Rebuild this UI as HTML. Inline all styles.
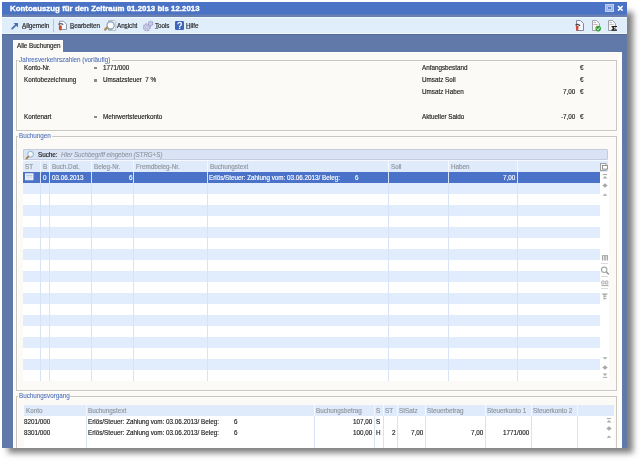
<!DOCTYPE html>
<html><head><meta charset="utf-8"><style>
html,body{margin:0;padding:0;width:641px;height:462px;overflow:hidden;background:#ffffff;}
body{position:relative;font-family:"Liberation Sans",sans-serif;}
.r{position:absolute;}
.t{will-change:transform;}
.t{position:absolute;font-size:6.3px;line-height:8px;white-space:nowrap;color:#222222;-webkit-text-stroke:0.15px currentColor;}
.title{font-size:7.8px;letter-spacing:0.05px;font-weight:bold;color:#ffffff;-webkit-text-stroke:0.35px #ffffff;}
.glabel{color:#4d6fb8;-webkit-text-stroke:0.08px currentColor;}
.head{color:#8e949c;}
.sel{color:#ffffff;}
.suche{color:#1a1a1a;-webkit-text-stroke:0.16px #1a1a1a;}
.ital{font-style:italic;color:#8a919c;-webkit-text-stroke:0.05px currentColor;}
u{text-decoration:underline;text-decoration-thickness:0.6px;text-underline-offset:0.3px;text-decoration-color:rgba(0,0,0,0.45);}
.tb{font-size:6.3px;letter-spacing:-0.05px;color:#1e1e1e;-webkit-text-stroke:0.15px #1e1e1e;}
</style></head><body>
<div class="r" style="left:2px;top:7px;width:625px;height:441px;background:#6179a9;box-shadow:6px 5px 6px rgba(0,0,0,0.5);"></div>
<div class="r" style="left:0;top:0;width:627px;height:448px;overflow:hidden;">
<div class="r" style="left:2px;top:2px;width:625px;height:13px;background:#4a73c6;"></div>
<div class="r" style="left:2px;top:14px;width:625px;height:1px;background:#5a78b8;"></div>
<div class="r" style="left:2px;top:15px;width:625px;height:2px;background:#6a80b0;"></div>
<div class="t title" style="left:9.8px;top:4.70px;">Kontoauszug für den Zeitraum 01.2013 bis 12.2013</div>
<div class="r" style="left:2px;top:17px;width:625px;height:17px;background:#e0eefb;border-top:1px solid #eef6fe;box-sizing:border-box;"></div>
<div class="r" style="left:2px;top:33px;width:625px;height:1px;background:#eef6fd;"></div>
<div class="r" style="left:2px;top:34px;width:625px;height:1px;background:#566d9a;"></div>
<div class="r" style="left:13px;top:52px;width:609px;height:396px;background:#fbfaf6;border:1px solid #ffffff;border-right:3px solid #ffffff;box-sizing:border-box;"></div>
<div class="r" style="left:13px;top:40px;width:50px;height:13px;background:#fbfaf6;border:1px solid #ffffff;border-bottom:none;box-sizing:border-box;"></div>
<div class="t " style="left:17.3px;top:41.50px;letter-spacing:-0.05px;">Alle Buchungen</div>
<div class="r" style="left:16px;top:60px;width:601px;height:71px;border:1px solid #c9c7be;border-bottom:1px solid #c9c7be;box-shadow:inset 1px 1px 0 #ffffff, 1px 1px 0 #ffffff;box-sizing:border-box;"></div>
<div class="r" style="left:18px;top:56px;width:94px;height:8px;background:#fbfaf6;"></div>
<div class="t glabel" style="left:18.8px;top:56.10px;">Jahresverkehrszahlen (vorläufig)</div>
<div class="t " style="left:23.5px;top:63.80px;">Konto-Nr.</div>
<div class="t " style="left:23.5px;top:76.30px;">Kontobezeichnung</div>
<div class="t " style="left:23.5px;top:112.80px;">Kontenart</div>
<div class="r" style="left:94px;top:66.7px;width:3px;height:2.6px;background:#8a8a8a;"></div>
<div class="t " style="left:102.6px;top:63.80px;">1771/000</div>
<div class="r" style="left:94px;top:79.2px;width:3px;height:2.6px;background:#8a8a8a;"></div>
<div class="t " style="left:102.6px;top:76.30px;">Umsatzsteuer&nbsp; 7 %</div>
<div class="r" style="left:94px;top:115.7px;width:3px;height:2.6px;background:#8a8a8a;"></div>
<div class="t " style="left:102.6px;top:112.80px;">Mehrwertsteuerkonto</div>
<div class="t " style="left:422px;top:63.70px;">Anfangsbestand</div>
<div class="t " style="left:579.5px;top:63.70px;">€</div>
<div class="t " style="left:422px;top:75.90px;">Umsatz Soll</div>
<div class="t " style="left:579.5px;top:75.90px;">€</div>
<div class="t " style="left:422px;top:88.30px;">Umsatz Haben</div>
<div class="t " style="left:579.5px;top:88.30px;">€</div>
<div class="t " style="left:422px;top:112.70px;">Aktueller Saldo</div>
<div class="t " style="left:579.5px;top:112.70px;">€</div>
<div class="t " style="right:51.799999999999955px;top:88.30px;">7,00</div>
<div class="t " style="right:51.799999999999955px;top:112.70px;">-7,00</div>
<div class="r" style="left:16px;top:136px;width:601px;height:255px;border:1px solid #c9c7be;border-bottom:1px solid #c9c7be;box-shadow:inset 1px 1px 0 #ffffff, 1px 1px 0 #ffffff;box-sizing:border-box;"></div>
<div class="r" style="left:18px;top:132px;width:33.5px;height:8px;background:#fbfaf6;"></div>
<div class="t glabel" style="left:18.8px;top:132.10px;">Buchungen</div>
<div class="r" style="left:23px;top:149px;width:585px;height:11px;background:#d9e3f4;border:1px solid #c3cde0;border-radius:1px;box-sizing:border-box;"></div>
<div class="r" style="left:23px;top:160px;width:585px;height:1px;background:#f6f9fd;"></div>
<div class="t suche" style="left:37.6px;top:151.00px;">Suche:</div>
<div class="t ital" style="left:61px;top:151.00px;letter-spacing:-0.08px;">Hier Suchbegriff eingeben (STRG+S)</div>
<div class="r" style="left:23px;top:161px;width:585px;height:11px;background:#dfebfb;"></div>
<div class="t head" style="left:24.8px;top:162.50px;">ST</div>
<div class="t head" style="left:42.5px;top:162.50px;">B</div>
<div class="t head" style="left:51.5px;top:162.50px;">Buch.Dat.</div>
<div class="t head" style="left:93.5px;top:162.50px;">Beleg-Nr.</div>
<div class="t head" style="left:135.5px;top:162.50px;">Fremdbeleg-Nr.</div>
<div class="t head" style="left:209.5px;top:162.50px;">Buchungstext</div>
<div class="t head" style="left:390.5px;top:162.50px;">Soll</div>
<div class="t head" style="left:450.5px;top:162.50px;">Haben</div>
<div class="t head" style="left:519.5px;top:162.50px;"></div>
<div class="r" style="left:23px;top:172px;width:586px;height:209px;background:#ffffff;"></div>
<div class="r" style="left:23px;top:172px;width:577px;height:11px;background:#4a72c8;"></div>
<div class="r" style="left:23px;top:183px;width:577px;height:11px;background:#e1edfc;"></div>
<div class="r" style="left:23px;top:205px;width:577px;height:11px;background:#e1edfc;"></div>
<div class="r" style="left:23px;top:227px;width:577px;height:11px;background:#e1edfc;"></div>
<div class="r" style="left:23px;top:249px;width:577px;height:11px;background:#e1edfc;"></div>
<div class="r" style="left:23px;top:271px;width:577px;height:11px;background:#e1edfc;"></div>
<div class="r" style="left:23px;top:293px;width:577px;height:11px;background:#e1edfc;"></div>
<div class="r" style="left:23px;top:315px;width:577px;height:11px;background:#e1edfc;"></div>
<div class="r" style="left:23px;top:337px;width:577px;height:11px;background:#e1edfc;"></div>
<div class="r" style="left:23px;top:359px;width:577px;height:11px;background:#e1edfc;"></div>
<div class="r" style="left:40px;top:172px;width:1px;height:209px;background:#d8e4f6;"></div>
<div class="r" style="left:40px;top:161px;width:1px;height:11px;background:#f4f8fe;"></div>
<div class="r" style="left:49px;top:172px;width:1px;height:209px;background:#d8e4f6;"></div>
<div class="r" style="left:49px;top:161px;width:1px;height:11px;background:#f4f8fe;"></div>
<div class="r" style="left:91px;top:172px;width:1px;height:209px;background:#d8e4f6;"></div>
<div class="r" style="left:91px;top:161px;width:1px;height:11px;background:#f4f8fe;"></div>
<div class="r" style="left:133px;top:172px;width:1px;height:209px;background:#d8e4f6;"></div>
<div class="r" style="left:133px;top:161px;width:1px;height:11px;background:#f4f8fe;"></div>
<div class="r" style="left:207px;top:172px;width:1px;height:209px;background:#d8e4f6;"></div>
<div class="r" style="left:207px;top:161px;width:1px;height:11px;background:#f4f8fe;"></div>
<div class="r" style="left:388px;top:172px;width:1px;height:209px;background:#d8e4f6;"></div>
<div class="r" style="left:388px;top:161px;width:1px;height:11px;background:#f4f8fe;"></div>
<div class="r" style="left:448px;top:172px;width:1px;height:209px;background:#d8e4f6;"></div>
<div class="r" style="left:448px;top:161px;width:1px;height:11px;background:#f4f8fe;"></div>
<div class="r" style="left:517px;top:172px;width:1px;height:209px;background:#d8e4f6;"></div>
<div class="r" style="left:517px;top:161px;width:1px;height:11px;background:#f4f8fe;"></div>
<div class="t sel" style="left:43px;top:173.50px;">0</div>
<div class="t sel" style="left:52.3px;top:173.50px;">03.06.2013</div>
<div class="t sel" style="right:494.7px;top:173.50px;">6</div>
<div class="t sel" style="left:209.4px;top:173.50px;">Erlös/Steuer: Zahlung vom: 03.06.2013/ Beleg:</div>
<div class="t sel" style="left:354.6px;top:173.50px;">6</div>
<div class="t sel" style="right:111.5px;top:173.50px;">7,00</div>
<div class="r" style="left:16px;top:396px;width:601px;height:52px;border:1px solid #c9c7be;border-bottom:none;box-shadow:inset 1px 1px 0 #ffffff, 1px 1px 0 #ffffff;box-sizing:border-box;"></div>
<div class="r" style="left:18px;top:392px;width:52px;height:8px;background:#fbfaf6;"></div>
<div class="t glabel" style="left:18.8px;top:392.10px;">Buchungsvorgang</div>
<div class="r" style="left:23.75px;top:405px;width:590px;height:11px;background:#dfebfb;"></div>
<div class="r" style="left:23.75px;top:416px;width:590px;height:32px;background:#ffffff;"></div>
<div class="t head" style="left:25.8px;top:406.50px;">Konto</div>
<div class="t head" style="left:87.8px;top:406.50px;">Buchungstext</div>
<div class="t head" style="left:315.8px;top:406.50px;">Buchungsbetrag</div>
<div class="t head" style="left:375.8px;top:406.50px;">S</div>
<div class="t head" style="left:384.8px;top:406.50px;">ST</div>
<div class="t head" style="left:398.8px;top:406.50px;">StSatz</div>
<div class="t head" style="left:426.8px;top:406.50px;">Steuerbetrag</div>
<div class="t head" style="left:486.8px;top:406.50px;">Steuerkonto 1</div>
<div class="t head" style="left:532.8px;top:406.50px;">Steuerkonto 2</div>
<div class="t head" style="left:578.8px;top:406.50px;"></div>
<div class="r" style="left:86px;top:416px;width:1px;height:32px;background:#d8e4f6;"></div>
<div class="r" style="left:86px;top:405px;width:1px;height:11px;background:#f4f8fe;"></div>
<div class="r" style="left:314px;top:416px;width:1px;height:32px;background:#d8e4f6;"></div>
<div class="r" style="left:314px;top:405px;width:1px;height:11px;background:#f4f8fe;"></div>
<div class="r" style="left:374px;top:416px;width:1px;height:32px;background:#d8e4f6;"></div>
<div class="r" style="left:374px;top:405px;width:1px;height:11px;background:#f4f8fe;"></div>
<div class="r" style="left:383px;top:416px;width:1px;height:32px;background:#d8e4f6;"></div>
<div class="r" style="left:383px;top:405px;width:1px;height:11px;background:#f4f8fe;"></div>
<div class="r" style="left:397px;top:416px;width:1px;height:32px;background:#d8e4f6;"></div>
<div class="r" style="left:397px;top:405px;width:1px;height:11px;background:#f4f8fe;"></div>
<div class="r" style="left:425px;top:416px;width:1px;height:32px;background:#d8e4f6;"></div>
<div class="r" style="left:425px;top:405px;width:1px;height:11px;background:#f4f8fe;"></div>
<div class="r" style="left:485px;top:416px;width:1px;height:32px;background:#d8e4f6;"></div>
<div class="r" style="left:485px;top:405px;width:1px;height:11px;background:#f4f8fe;"></div>
<div class="r" style="left:531px;top:416px;width:1px;height:32px;background:#d8e4f6;"></div>
<div class="r" style="left:531px;top:405px;width:1px;height:11px;background:#f4f8fe;"></div>
<div class="r" style="left:577px;top:416px;width:1px;height:32px;background:#d8e4f6;"></div>
<div class="r" style="left:577px;top:405px;width:1px;height:11px;background:#f4f8fe;"></div>
<div class="t " style="left:24px;top:417.50px;">8201/000</div>
<div class="t " style="left:88px;top:417.50px;">Erlös/Steuer: Zahlung vom: 03.06.2013/ Beleg:</div>
<div class="t " style="left:233.8px;top:417.50px;">6</div>
<div class="t " style="right:255px;top:417.50px;">107,00</div>
<div class="t " style="left:376px;top:417.50px;">S</div>
<div class="t " style="left:24px;top:428.80px;">8301/000</div>
<div class="t " style="left:88px;top:428.80px;">Erlös/Steuer: Zahlung vom: 03.06.2013/ Beleg:</div>
<div class="t " style="left:233.8px;top:428.80px;">6</div>
<div class="t " style="right:255px;top:428.80px;">100,00</div>
<div class="t " style="left:376px;top:428.80px;">H</div>
<div class="t " style="right:231px;top:428.80px;">2</div>
<div class="t " style="right:204px;top:428.80px;">7,00</div>
<div class="t " style="right:144px;top:428.80px;">7,00</div>
<div class="t " style="right:97.70000000000005px;top:428.80px;">1771/000</div>
<svg class="r" style="left:11px;top:22px" width="8" height="8" viewBox="0 0 8 8"><path d="M1.2 6.6 L5.2 2.6" stroke="#4a6fb8" stroke-width="1.8" stroke-linecap="round"/><path d="M2.6 1 L7 1 L7 5.4 Z" fill="#4a6fb8"/></svg>
<svg class="r" style="left:57px;top:20px" width="11" height="11" viewBox="0 0 11 11"><path d="M2.5 1.2 H6.5 L9.5 4.2 V9.5 H2.5 Z" fill="#f6f8fb" stroke="#8e99ab" stroke-width="1"/><path d="M1.4 4.6 Q3.6 2.6 6.2 4.8" stroke="#5c6470" stroke-width="1.3" fill="none"/><rect x="1.9" y="5.2" width="2.9" height="5.2" rx="1.4" fill="#c9522e"/></svg>
<svg class="r" style="left:103px;top:19px" width="14" height="13" viewBox="0 0 14 13"><path d="M5.5 1.5 H11.5 L12.8 2.8 V11.5 H5.5 Z" fill="#eef3fa" stroke="#b4c0d2" stroke-width="1"/><circle cx="7.6" cy="6.4" r="3.6" fill="#ffffff" stroke="#98a8c0" stroke-width="1.4"/><path d="M5.2 10.2 Q7.6 11 10 9.6" stroke="#7aa090" stroke-width="0.8" fill="none"/><path d="M2 10.6 L4.2 8.6" stroke="#b08a58" stroke-width="2.2" stroke-linecap="round"/></svg>
<svg class="r" style="left:142px;top:20px" width="12" height="12" viewBox="0 0 12 12"><circle cx="4.8" cy="7.2" r="3.3" fill="#d4d4ec" stroke="#a4a4ca" stroke-width="1.3" stroke-dasharray="2 0.7"/><circle cx="4.8" cy="7.2" r="1.6" fill="none" stroke="#b4b4d6" stroke-width="0.8"/><circle cx="8.6" cy="3.6" r="2.3" fill="#cacae6" stroke="#9c9cc6" stroke-width="1.1" stroke-dasharray="1.6 0.6"/></svg>
<svg class="r" style="left:175px;top:21px" width="9" height="9" viewBox="0 0 9 9"><rect x="0" y="0" width="9" height="9" rx="1.2" fill="#3d66bb"/><path d="M2.9 3.3 Q2.9 1.4 4.6 1.4 Q6.4 1.4 6.4 3.1 Q6.4 4.2 5.2 4.8 Q4.6 5.1 4.6 6" fill="none" stroke="#ffffff" stroke-width="1.3"/><rect x="3.9" y="6.7" width="1.4" height="1.4" fill="#ffffff"/></svg>
<svg class="r" style="left:574px;top:19px" width="11" height="13" viewBox="0 0 11 13"><path d="M2.5 1.5 H6.5 L9.5 4.5 V11.5 H2.5 Z" fill="#f4f6fa" stroke="#7f8ba0" stroke-width="1"/><path d="M1.5 6 Q4 4.5 6 6.8" stroke="#444" stroke-width="1.3" fill="none"/><path d="M1.8 6.8 L4.6 6.8 L4.2 11.8 L2.2 11.8 Z" fill="#d04a3a"/></svg>
<svg class="r" style="left:591px;top:19px" width="11" height="13" viewBox="0 0 11 13"><path d="M1.5 1.5 H5.5 L8.5 4.5 V11.5 H1.5 Z" fill="#f6f6f6" stroke="#a0a4ac" stroke-width="1"/><path d="M2.5 3.5 H5 M2.5 5.5 H6.5" stroke="#c8a0a0" stroke-width="0.8"/><circle cx="7.2" cy="9.6" r="2.8" fill="#3aa03a"/><path d="M5.8 9.6 L7 10.8 L8.8 8.6" stroke="#fff" stroke-width="0.9" fill="none"/></svg>
<svg class="r" style="left:607px;top:19px" width="11" height="13" viewBox="0 0 11 13"><path d="M1.5 1.5 H5.5 L8.5 4.5 V11.5 H1.5 Z" fill="#f6f6f6" stroke="#9ca0a8" stroke-width="1"/><path d="M2.5 3.5 H5 M2.5 5.5 H6.5" stroke="#b0b0b0" stroke-width="0.8"/><path d="M4.5 7 H10 V8 H6.5 L8 9.3 L6.5 10.6 H10 V11.8 H4.5 V10.8 L6 9.3 L4.5 7.8 Z" fill="#222"/></svg>
<svg class="r" style="left:605px;top:4px" width="9" height="8" viewBox="0 0 9 8"><rect x="0.6" y="0.6" width="7.8" height="6.8" fill="#8ea8e2" stroke="#c2d0f2" stroke-width="1.2"/><rect x="2.4" y="2.4" width="4.2" height="3.2" rx="0.8" fill="#5f84d0" stroke="#dbe4f8" stroke-width="0.8"/></svg>
<svg class="r" style="left:617px;top:5px" width="7" height="7" viewBox="0 0 7 7"><path d="M1 1 L5.6 5.6 M5.6 1 L1 5.6" stroke="#ffffff" stroke-width="1.6"/></svg>
<svg class="r" style="left:25px;top:150px" width="10" height="10" viewBox="0 0 10 10"><circle cx="5.6" cy="4.2" r="2.9" fill="#e6f4fc" stroke="#8fb0cc" stroke-width="1"/><circle cx="4.9" cy="3.5" r="1" fill="#ffffff"/><path d="M1.6 8.4 L3.3 6.7" stroke="#a87a4a" stroke-width="1.9" stroke-linecap="round"/></svg>
<svg class="r" style="left:25px;top:173px" width="9" height="8" viewBox="0 0 9 8"><rect x="0.5" y="0.8" width="7.5" height="6" fill="#e4ebf7" stroke="#f4f7fc" stroke-width="0.9"/><path d="M1.2 2.6 H7.3" stroke="#a8b8d8" stroke-width="0.8"/><path d="M2.5 4.2 H3.3 M4.3 4.2 H5.1 M6.1 4.2 H6.9" stroke="#b8c6e0" stroke-width="0.8"/></svg>
<svg class="r" style="left:600px;top:163px" width="8" height="8" viewBox="0 0 8 8"><rect x="0.5" y="0.5" width="5.5" height="7" fill="#f4f4f4" stroke="#9a9a9a" stroke-width="0.9"/><rect x="2.5" y="2.5" width="5" height="3.6" fill="#ffffff" stroke="#8a8a8a" stroke-width="0.9"/></svg>
<svg class="r" style="left:602px;top:174px" width="6" height="5" viewBox="0 0 6 5"><path d="M0.8 0.6 H5.2" stroke="#a9a9a9" stroke-width="1"/><path d="M0.6 4.4 L3 2 L5.4 4.4 Z" fill="#a9a9a9"/></svg>
<svg class="r" style="left:602px;top:183px" width="6" height="5" viewBox="0 0 6 5"><path d="M0.3 2.5 L3 0.2 L5.7 2.5 L3 4.8 Z" fill="#a9a9a9"/></svg>
<svg class="r" style="left:602px;top:192.5px" width="6" height="3" viewBox="0 0 6 3"><path d="M0.6 2.8 L3 0.4 L5.4 2.8 Z" fill="#a9a9a9"/></svg>
<svg class="r" style="left:601.6px;top:356.5px" width="6" height="3" viewBox="0 0 6 3"><path d="M0.6 0.2 L3 2.6 L5.4 0.2 Z" fill="#a9a9a9"/></svg>
<svg class="r" style="left:601.6px;top:364.5px" width="6" height="5" viewBox="0 0 6 5"><path d="M0.3 2.5 L3 0.2 L5.7 2.5 L3 4.8 Z" fill="#a9a9a9"/></svg>
<svg class="r" style="left:601.6px;top:372.5px" width="6" height="5" viewBox="0 0 6 5"><path d="M0.6 0.6 L3 3 L5.4 0.6 Z" fill="#a9a9a9"/><path d="M0.8 4.4 H5.2" stroke="#a9a9a9" stroke-width="1"/></svg>
<svg class="r" style="left:606px;top:417.5px" width="6" height="5" viewBox="0 0 6 5"><path d="M0.8 0.6 H5.2" stroke="#a9a9a9" stroke-width="1"/><path d="M0.6 4.4 L3 2 L5.4 4.4 Z" fill="#a9a9a9"/></svg>
<svg class="r" style="left:606px;top:426px" width="6" height="5" viewBox="0 0 6 5"><path d="M0.3 2.5 L3 0.2 L5.7 2.5 L3 4.8 Z" fill="#a9a9a9"/></svg>
<svg class="r" style="left:606px;top:434.5px" width="6" height="3" viewBox="0 0 6 3"><path d="M0.6 2.8 L3 0.4 L5.4 2.8 Z" fill="#a9a9a9"/></svg>
<svg class="r" style="left:601px;top:255px" width="8" height="6" viewBox="0 0 8 6"><path d="M1 0.5 H7" stroke="#a8a8a8" stroke-width="0.9"/><path d="M1.5 1 V5.5 M3.3 1 V5.5 M4.8 1 V5.5 M6.5 1 V5.5" stroke="#a8a8a8" stroke-width="1.1"/></svg>
<div class="r" style="left:601px;top:263px;width:7px;height:1px;background:#dadada;"></div>
<svg class="r" style="left:600px;top:266px" width="10" height="10" viewBox="0 0 10 10"><circle cx="4.2" cy="3.8" r="2.7" fill="none" stroke="#a8a8a8" stroke-width="1.1"/><path d="M6.1 5.8 L8.8 8.4" stroke="#9a9a9a" stroke-width="1.5"/></svg>
<div class="r" style="left:601px;top:276px;width:7px;height:1px;background:#dadada;"></div>
<svg class="r" style="left:601px;top:280px" width="8" height="7" viewBox="0 0 8 7"><path d="M0.8 1 H3 V4 H0.8 Z M4.6 1 H6.8 V4 H4.6 Z" fill="none" stroke="#a8a8a8" stroke-width="0.9"/><path d="M0.5 5.6 H7.5" stroke="#a8a8a8" stroke-width="1"/></svg>
<div class="r" style="left:601px;top:288px;width:7px;height:1px;background:#dadada;"></div>
<svg class="r" style="left:601px;top:293px" width="8" height="7" viewBox="0 0 8 7"><path d="M0.5 0.5 H7 L4.8 2.5 H2.7 Z" fill="#a8a8a8"/><path d="M2.5 3.6 H5.5 M2.5 5.6 H5.5" stroke="#a8a8a8" stroke-width="0.9"/><path d="M3.2 2.5 V6.5" stroke="#a8a8a8" stroke-width="0.8"/></svg>
<div class="t tb" style="left:22.4px;top:21.60px;"><u>A</u>llgemein</div>
<div class="r" style="left:53px;top:19px;width:1px;height:13px;background:#b5c4da;"></div>
<div class="t tb" style="left:69.6px;top:21.60px;"><u>B</u>earbeiten</div>
<div class="t tb" style="left:117px;top:21.60px;">An<u>s</u>icht</div>
<div class="t tb" style="left:154.6px;top:21.60px;"><u>T</u>ools</div>
<div class="t tb" style="left:185.8px;top:21.60px;"><u>H</u>ilfe</div>
</div>
</body></html>
